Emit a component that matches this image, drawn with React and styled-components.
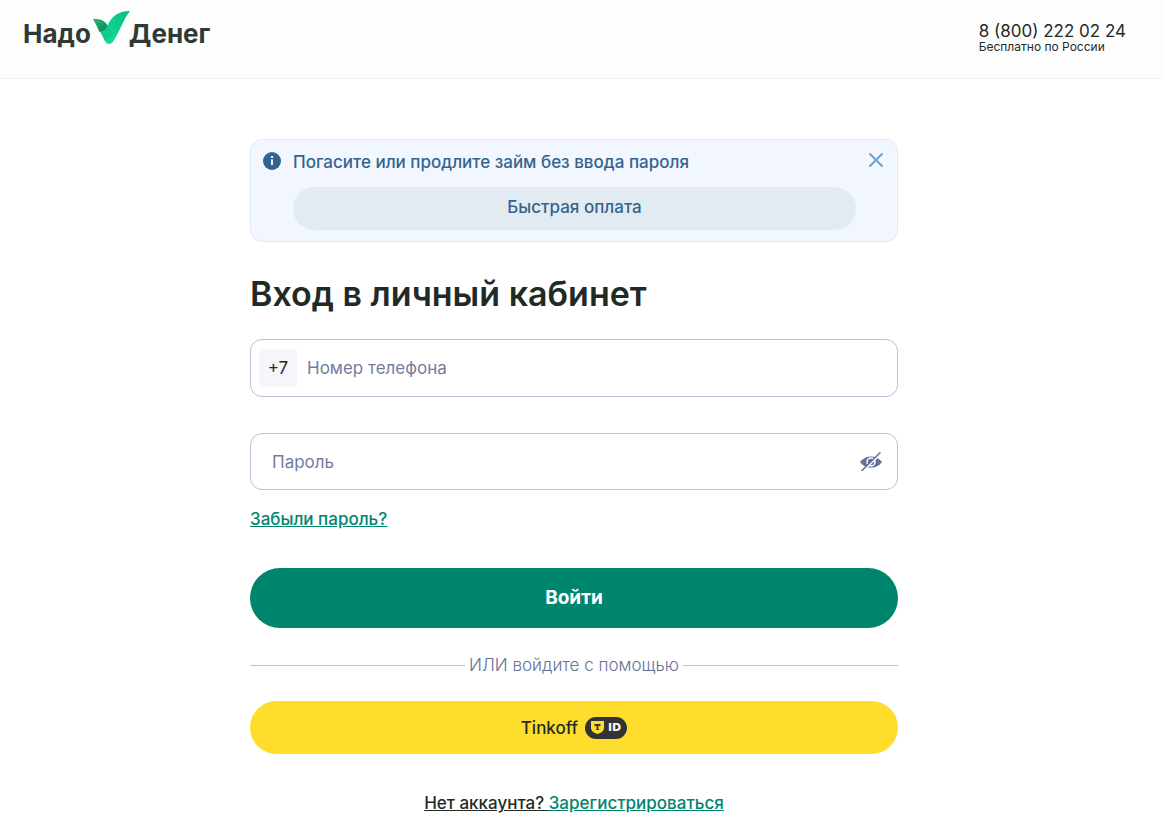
import React from "react";
import styled, { createGlobalStyle } from "styled-components";

const GlobalStyle = createGlobalStyle`
  *, *::before, *::after { box-sizing: border-box; }
  body {
    margin: 0;
    background: #fff;
    color: #1f2b26;
    font-family: Inter, "Liberation Sans", sans-serif;
    font-size: 17px;
    line-height: 24px;
  }
  button, input { font: inherit; color: inherit; }
  button { border: 0; padding: 0; cursor: pointer; }
  h1, p { margin: 0; }
`;

const Page = styled.div`
  overflow-x: hidden;
`;

const Header = styled.header`
  display: flex;
  justify-content: space-between;
  align-items: flex-start;
  height: 79px;
  padding: 11px 39px 0 23px;
  background: #fdfdfd;
  border-bottom: 1px solid #f1f2f4;
`;

const Logo = styled.a`
  display: flex;
  align-items: flex-start;
  color: #2f3a36;
  text-decoration: none;
  svg { display: block; margin: 0 -2px 0 2px; }
`;

const LogoWord = styled.span`
  padding-top: 6px;
  font-size: 26px;
  line-height: 33px;
  font-weight: 700;
`;

const Contact = styled.div`
  padding-top: 10px;
`;

const Phone = styled.a`
  display: block;
  color: #1f2b26;
  line-height: 20px;
  text-decoration: none;
`;

const PhoneNote = styled.p`
  font-size: 12px;
  line-height: 12px;
`;

const Main = styled.main`
  padding: 60px 17px 0 0;
`;

const Column = styled.div`
  width: 100%;
  max-width: 648px;
  margin: 0 auto;
`;

const Notice = styled.section`
  display: grid;
  grid-template-columns: 18px 1fr 16px;
  column-gap: 12px;
  padding: 12px 13px 11px 12px;
  border: 1px solid #e2eaf1;
  border-radius: 12px;
  background: #f1f6ff;
  color: #34648e;
  font-weight: 500;
  svg { display: block; }
`;

const InfoMark = styled.span`
  height: 18px;
`;

const NoticeBody = styled.div`
  line-height: 20px;
`;

const QuickPay = styled.button`
  display: block;
  width: 100%;
  height: 43px;
  margin-top: 15px;
  padding-bottom: 3px;
  border-radius: 22px;
  background: #e3ebf2;
`;

const IconButton = styled.button`
  width: ${(p) => p.$size}px;
  height: ${(p) => p.$size}px;
  background: none;
  svg { display: block; }
`;

const Title = styled.h1`
  margin-top: 31px;
  font-size: 34px;
  line-height: 42px;
  font-weight: 600;
`;

const Field = styled.div`
  display: flex;
  align-items: center;
  height: ${(p) => p.$height}px;
  margin-top: ${(p) => p.$gap}px;
  padding: ${(p) => p.$pad};
  border: 1px solid #b6c0d8;
  border-radius: 12px;
`;

const Prefix = styled.span`
  width: 38px;
  margin-right: 10px;
  border-radius: 4px;
  background: #f6f6fa;
  line-height: 38px;
  text-align: center;
`;

const Input = styled.input`
  flex: 1;
  min-width: 0;
  height: 38px;
  padding: 0;
  border: 0;
  outline: 0;
  background: none;
  &::placeholder { color: #737c9f; opacity: 1; }
`;

const TextLink = styled.a`
  color: #00856d;
  font-weight: 500;
  text-decoration: underline;
`;

const Forgot = styled.p`
  margin-top: 17px;
`;

const Submit = styled.button`
  display: block;
  width: 100%;
  height: 60px;
  margin-top: 37px;
  border-radius: 30px;
  background: #00856d;
  color: #fff;
  font-size: 19px;
  font-weight: 700;
`;

const Divider = styled.div`
  display: flex;
  align-items: center;
  gap: 4px;
  margin-top: 25px;
  color: #66719a;
  font-weight: 300;
  &::before, &::after {
    content: "";
    flex: 1;
    height: 1px;
    background: #b6c0d8;
  }
`;

const TinkoffButton = styled.button`
  display: flex;
  align-items: center;
  justify-content: center;
  gap: 7px;
  width: 100%;
  height: 53px;
  margin-top: 24px;
  border-radius: 27px;
  background: #ffdd2d;
  font-weight: 500;
`;

const IdBadge = styled.span`
  display: flex;
  align-items: center;
  gap: 4px;
  height: 22px;
  padding: 0 6px;
  border-radius: 11px;
  background: #333;
  color: #fff;
  font-family: "DejaVu Sans", sans-serif;
  font-size: 11px;
  font-weight: 700;
`;

const Register = styled.p`
  margin: 37px 0 5px;
  text-align: center;
  font-weight: 500;
  text-decoration: underline;
`;

const LogoMark = () => (
  <svg width="38" height="34" viewBox="0 0 38 34" aria-hidden="true">
    <defs>
      <linearGradient id="leaf" x1="1" y1="0" x2="0.3" y2="1">
        <stop offset="0" stopColor="#0bbd80" />
        <stop offset="1" stopColor="#12dca0" />
      </linearGradient>
      <linearGradient id="stem" x1="0" y1="0" x2="0.6" y2="1">
        <stop offset="0" stopColor="#2bb581" />
        <stop offset="1" stopColor="#128a55" />
      </linearGradient>
    </defs>
    <path d="M37 0C25 0 18 6 14.500 14.500L8 21L12 30C14 34 18 34 20.500 30C27 20 30 9 37 0Z" fill="url(#leaf)" />
    <path d="M0 8C8 8 12 10 14.500 14.500C18 18 20 22 19 26L12 30C8 23 5 15 0 8Z" fill="#12ca8f" />
    <path d="M0 8C8 8 12 10 14.500 14.500C13 18 11 20 6.500 21C4.500 16 2.500 12 0 8Z" fill="url(#stem)" />
  </svg>
);

const InfoIcon = () => (
  <svg width="18" height="18" viewBox="0 0 18 18" aria-hidden="true">
    <circle cx="9" cy="9" r="9" fill="#34648e" />
    <path d="M8 4h2v2H8zM8 7.500h2V13H8z" fill="#f1f6ff" />
  </svg>
);

const CloseIcon = () => (
  <svg width="16" height="16" viewBox="0 0 16 16" aria-hidden="true">
    <path d="M2 2L14 14M14 2L2 14" stroke="#6ba0cf" strokeWidth="1.900" strokeLinecap="round" />
  </svg>
);

const EyeOffIcon = () => (
  <svg width="22" height="20" viewBox="0 0 22 20" aria-hidden="true">
    <path d="M0 10C5 2.500 17 2.500 22 10C17 17.500 5 17.500 0 10Z" fill="#66719a" />
    <circle cx="11" cy="10" r="4" fill="none" stroke="#fff" strokeWidth="1.500" />
    <path d="M3 19.200L21 1.600" stroke="#fff" strokeWidth="1.500" />
    <path d="M2 18.500L20 .8" stroke="#66719a" strokeWidth="1.500" strokeLinecap="round" />
  </svg>
);

const ShieldIcon = () => (
  <svg width="13" height="13" viewBox="0 0 13 13" aria-hidden="true">
    <path d="M0 0H13V7C13 10 10 12 6.500 13C3 12 0 10 0 7Z" fill="#ffdd2d" />
    <path d="M3.500 3H9.500V5.200H8.700L8.400 4.700H7.400V8L8.200 8.700V9H4.800V8.700L5.600 8V4.700H4.600L4.300 5.200H3.500Z" fill="#333" />
  </svg>
);

export default function App() {
  return (
    <Page>
      <GlobalStyle />
      <Header>
        <Logo href="#">
          <LogoWord>Надо</LogoWord>
          <LogoMark />
          <LogoWord>Денег</LogoWord>
        </Logo>
        <Contact>
          <Phone href="tel:88002220224">8 (800) 222 02 24</Phone>
          <PhoneNote>Бесплатно по России</PhoneNote>
        </Contact>
      </Header>
      <Main>
        <Column>
          <Notice>
            <InfoMark><InfoIcon /></InfoMark>
            <NoticeBody>
              <p>Погасите или продлите займ без ввода пароля</p>
              <QuickPay type="button">Быстрая оплата</QuickPay>
            </NoticeBody>
            <IconButton type="button" $size={16} aria-label="Закрыть"><CloseIcon /></IconButton>
          </Notice>
          <Title>Вход в личный кабинет</Title>
          <form onSubmit={(e) => e.preventDefault()}>
            <Field $height={58} $gap={24} $pad="0 8px">
              <Prefix>+7</Prefix>
              <Input type="tel" placeholder="Номер телефона" aria-label="Номер телефона" />
            </Field>
            <Field $height={57} $gap={36} $pad="0 15px 0 21px">
              <Input type="password" placeholder="Пароль" aria-label="Пароль" />
              <IconButton type="button" $size={22} aria-label="Показать пароль"><EyeOffIcon /></IconButton>
            </Field>
            <Forgot><TextLink href="#">Забыли пароль?</TextLink></Forgot>
            <Submit type="submit">Войти</Submit>
          </form>
          <Divider>ИЛИ войдите с помощью</Divider>
          <TinkoffButton type="button">
            Tinkoff
            <IdBadge><ShieldIcon />ID</IdBadge>
          </TinkoffButton>
          <Register>Нет аккаунта? <TextLink href="#">Зарегистрироваться</TextLink></Register>
        </Column>
      </Main>
    </Page>
  );
}
